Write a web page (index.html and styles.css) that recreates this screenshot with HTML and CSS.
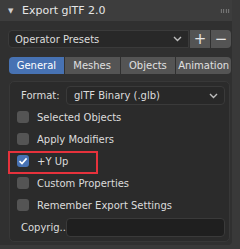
FILE: index.html
```html
<!DOCTYPE html>
<html lang="en">
<head>
    <meta charset="UTF-8" />
    <title>Export glTF 2.0</title>
    <link rel="stylesheet" href="styles.css">
</head>
<body>

    <!-- Export panel -->
    <div class="panel">
        <div class="panel-header">
            <span class="arrow">&#9660;</span>
            <span class="title">Export glTF 2.0</span>
            <span class="grip"></span>
        </div>

        <div class="panel-body">
            <div class="preset-row">
                <div class="select presets">
                    <span>Operator Presets</span>
                    <svg class="chevron" width="9" height="6" viewBox="0 0 9 6"><path d="M1 1 L4.5 4.5 L8 1" fill="none" stroke="#bdbdbd" stroke-width="1.4"/></svg>
                </div>
                <button class="icon-btn plus">+</button>
                <button class="icon-btn minus">&minus;</button>
            </div>

            <div class="tabs">
                <div class="tab active">General</div>
                <div class="tab">Meshes</div>
                <div class="tab">Objects</div>
                <div class="tab">Animation</div>
            </div>

            <div class="box">
                <div class="field-row">
                    <span class="field-label">Format:</span>
                    <div class="select format">
                        <span>glTF Binary (.glb)</span>
                        <svg class="chevron" width="9" height="6" viewBox="0 0 9 6"><path d="M1 1 L4.5 4.5 L8 1" fill="none" stroke="#bdbdbd" stroke-width="1.4"/></svg>
                    </div>
                </div>

                <div class="check-row"><span class="check"></span>Selected Objects</div>
                <div class="check-row"><span class="check"></span>Apply Modifiers</div>
                <div class="check-row highlight">
                    <span class="check on">
                        <svg width="12" height="12" viewBox="0 0 12 12"><path d="M2.5 6.2 L5 8.6 L9.6 3.4" fill="none" stroke="#fff" stroke-width="1.6"/></svg>
                    </span>+Y Up
                </div>
                <div class="check-row"><span class="check"></span>Custom Properties</div>
                <div class="check-row"><span class="check"></span>Remember Export Settings</div>

                <div class="field-row copy-row">
                    <span class="field-label">Copyrig..</span>
                    <div class="text-field"></div>
                </div>
            </div>
        </div>
    </div>

</body>
</html>
```

FILE: styles.css
```css
body {
    margin: 0;
    background-color: #393939;
    font-family: 'DejaVu Sans', sans-serif;
    font-size: 10px;
    color: #e0e0e0;
    width: 240px;
    height: 249px;
    overflow: hidden;
}

.panel {
    width: 232px;
    height: 245px;
    background-color: #303030;
    border-radius: 0 0 4px 0;
}

.panel-header {
    height: 21px;
    background-color: #3d3d3d;
    display: flex;
    align-items: center;
    padding-left: 8px;
    box-sizing: border-box;
}

.arrow {
    font-size: 7px;
    color: #cfcfcf;
    width: 14px;
}

.title {
    font-size: 11px;
    color: #e6e6e6;
    flex: 1;
}

.grip {
    width: 10px;
    height: 4px;
    margin-right: 2px;
    background-image: radial-gradient(circle, #8a8a8a 0.7px, transparent 0.8px);
    background-size: 2.5px 2px;
}

.panel-body {
    padding: 9px 1px 0 8px;
}

.preset-row {
    display: flex;
    height: 18px;
}

.select {
    display: flex;
    align-items: center;
    justify-content: space-between;
    background-color: #282828;
    border: 1px solid #3a3a3a;
    border-radius: 4px;
    box-sizing: border-box;
    padding: 0 6px 0 6px;
    color: #dcdcdc;
}

.presets {
    flex: 1;
    border-radius: 4px 0 0 4px;
}

.icon-btn {
    width: 20px;
    height: 18px;
    margin-left: 1px;
    padding: 0;
    background-color: #545454;
    border: none;
    color: #e6e6e6;
    font-family: 'DejaVu Sans', sans-serif;
    font-size: 15px;
    line-height: 18px;
}

.minus {
    border-radius: 0 4px 4px 0;
}

.tabs {
    display: flex;
    gap: 1px;
    margin-top: 9px;
    margin-left: 1px;
    height: 17px;
}

.tab {
    flex: 1;
    background-color: #545454;
    color: #e0e0e0;
    text-align: center;
    line-height: 17px;
}

.tab:first-child {
    border-radius: 4px 0 0 4px;
}

.tab:last-child {
    border-radius: 0 4px 4px 0;
}

.tab.active {
    background-color: #4772b3;
    color: #ffffff;
}

.box {
    margin: 7px 1px 0 1px;
    height: 161px;
    background-color: #2b2b2b;
    border: 1px solid #383838;
    border-radius: 5px;
    box-sizing: border-box;
    padding: 4px 4px 0 7px;
}

.field-row {
    display: flex;
    align-items: center;
    height: 19px;
    margin-bottom: 1px;
}

.field-label {
    flex: none;
    width: 45px;
    padding-left: 4px;
    color: #dcdcdc;
    white-space: nowrap;
}

.format {
    flex: 1;
    height: 19px;
    padding-left: 7px;
}

.check-row {
    display: flex;
    align-items: center;
    height: 22px;
    color: #dcdcdc;
    position: relative;
}

.check {
    width: 12px;
    height: 12px;
    background-color: #545454;
    border-radius: 3px;
    margin-right: 8px;
    display: flex;
}

.check.on {
    background-color: #4772b3;
}

.highlight::after {
    content: "";
    position: absolute;
    left: -9px;
    top: 1px;
    width: 86px;
    height: 19px;
    border: 2px solid #e6323c;
}

.copy-row {
    margin-top: 2px;
}

.text-field {
    flex: 1;
    height: 19px;
    background-color: #1f1f1f;
    border: 1px solid #3a3a3a;
    border-radius: 4px;
    box-sizing: border-box;
}
```
